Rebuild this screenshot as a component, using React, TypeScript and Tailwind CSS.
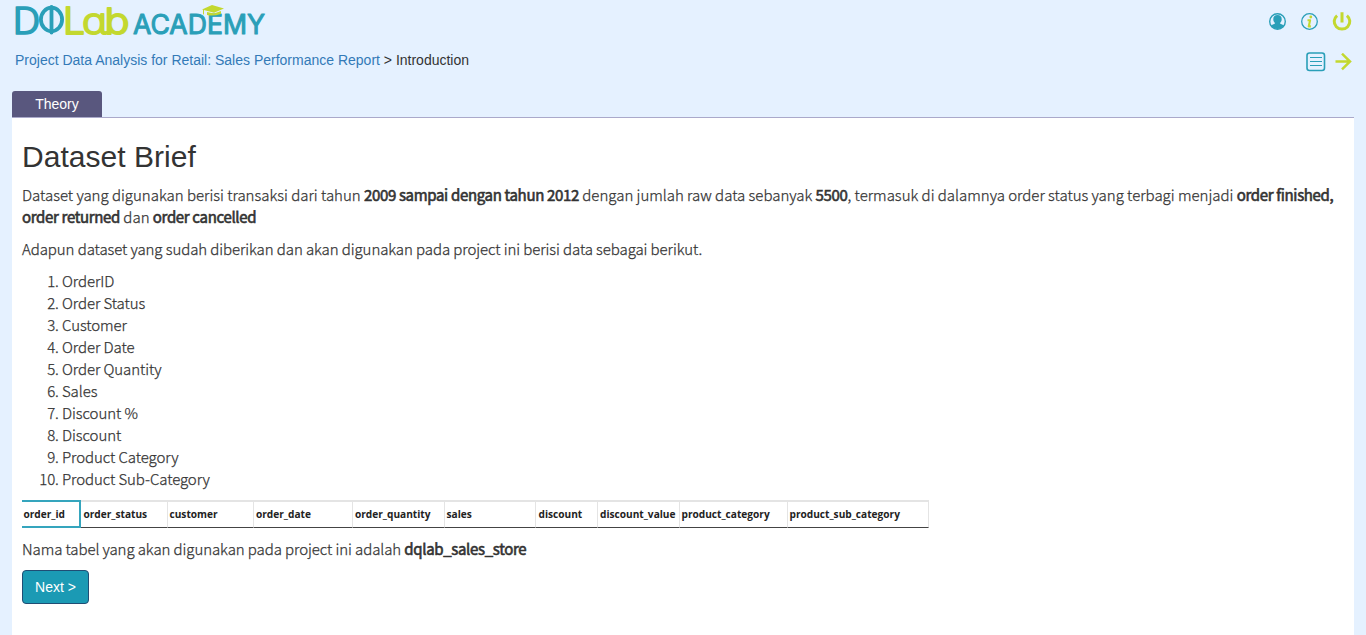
import React from "react";

const fields = [
  "OrderID",
  "Order Status",
  "Customer",
  "Order Date",
  "Order Quantity",
  "Sales",
  "Discount %",
  "Discount",
  "Product Category",
  "Product Sub-Category",
];

const columns = [
  { name: "order_status", width: "w-[87px] pl-[2.5px]" },
  { name: "customer", width: "w-[86px] pl-[1.5px]" },
  { name: "order_date", width: "w-[99px] pl-[2px]" },
  { name: "order_quantity", width: "w-[92px] pl-[2px]" },
  { name: "sales", width: "w-[91px] pl-[1.5px]" },
  { name: "discount", width: "w-[62px] pl-[2.5px]" },
  { name: "discount_value", width: "w-[82px] pl-[2px]" },
  { name: "product_category", width: "w-[108px] pl-[1.5px]" },
  { name: "product_sub_category", width: "w-[141px] pl-[1.5px]" },
];

function Bold({ children }: { children: React.ReactNode }) {
  return <b className="font-normal tracking-[-0.33px] [-webkit-text-stroke:0.6px_#333]">{children}</b>;
}

function Logo() {
  return (
    <svg width="256" height="40" viewBox="0 0 256 40" className="block overflow-visible font-['Inter',sans-serif]" strokeLinejoin="round" strokeLinecap="round">
      <g fill="#2a9fb8" stroke="#2a9fb8" strokeWidth="1.7">
        <text x="-2.300" y="34" fontSize="36.500" fontWeight="300" textLength="27.500" lengthAdjust="spacingAndGlyphs">D</text>
        <g fill="none" strokeWidth="3.800">
          <ellipse cx="36.500" cy="19.500" rx="10.600" ry="11.800" />
          <path d="M36.500 7v25.500" />
        </g>
      </g>
      <g fill="#c3d82f" stroke="#c3d82f" strokeWidth="1.900">
        <text x="48" y="34" fontSize="36.500" fontWeight="300" textLength="22" lengthAdjust="spacingAndGlyphs">L</text>
        <text x="67" y="34" fontSize="36" fontFamily="Noto Sans" fontWeight="300" textLength="25" lengthAdjust="spacingAndGlyphs">ɑ</text>
        <text x="89.500" y="34" fontSize="36" fontWeight="300" textLength="25" lengthAdjust="spacingAndGlyphs">b</text>
      </g>
      <text x="118" y="34" fontSize="26.5" fontWeight="400" fill="#2a9fb8" stroke="#2a9fb8" strokeWidth="1" textLength="132" lengthAdjust="spacingAndGlyphs">ACADEMY</text>
      <path d="M187 9.5 197 5 209 8.500 199 12.800Z" fill="#c3d82f" />
      <path d="M192 12v3q6 1.500 14-1v-3l-7 2.600Z" fill="#c3d82f" />
      <path d="M188.500 10v4" stroke="#c3d82f" />
    </svg>
  );
}

function UserIcon() {
  return (
    <svg width="18" height="18" viewBox="-0.5 0.5 18 18">
      <circle cx="9" cy="9" r="7.800" fill="#e5f1ff" stroke="#2a9fb8" strokeWidth="1.400" />
      <path d="M9 2.600c2.800 0 4.400 1.900 4.200 4.300-.1 1.700-.8 2.700-1.500 3.400v1c2 .5 3.300 1.200 3.600 2.300A7.400 7.400 0 0 1 9 16.600a7.400 7.400 0 0 1-6.300-3c.3-1.100 1.600-1.800 3.600-2.300v-1C5.600 9.600 4.900 8.600 4.800 6.900 4.600 4.500 6.200 2.600 9 2.600Z" fill="#2a9fb8" />
    </svg>
  );
}

function InfoIcon() {
  return (
    <svg width="18" height="18" viewBox="-0.5 0.5 18 18" fill="none">
      <circle cx="9" cy="9" r="7.800" stroke="#2a9fb8" strokeWidth="1.300" />
      <circle cx="10.300" cy="4.500" r="1.400" fill="#c3d82f" />
      <path d="M7 7.800h2.600L8.200 13.900h2.200" stroke="#c3d82f" strokeWidth="2.100" strokeLinejoin="round" />
    </svg>
  );
}

function PowerIcon() {
  return (
    <svg width="20" height="20" viewBox="-0.5 0 20 20" fill="none" stroke="#c3d82f" strokeWidth="3">
      <path d="M4.600 3.600a7.800 7.600 0 1 0 9.800 0M9.500 0.300v10.200" />
    </svg>
  );
}

function ListIcon() {
  return (
    <svg width="20" height="20" viewBox="0 0 20 20" fill="none" stroke="#2a9fb8">
      <rect x="1" y="1" width="17.500" height="17.500" rx="2.500" strokeWidth="1.600" />
      <path d="M4 5.500h12M4 9.500h12M4 13.500h12" strokeWidth="1.100" />
    </svg>
  );
}

function ArrowIcon() {
  return (
    <svg width="17" height="18" viewBox="0 0.500 17 18" fill="none" stroke="#c3d82f" strokeWidth="2.500">
      <path d="M0.500 9h14.500M7 1.200 15 9l-8 7.800" />
    </svg>
  );
}

export default function App() {
  return (
    <div className="flex h-[635px] flex-col overflow-hidden bg-[#e5f1ff] px-3 font-['Liberation_Sans',Arial,sans-serif] text-sm text-[#333]">
      <header className="flex h-[91px] shrink-0 justify-between">
        <div className="flex flex-col pl-[3px]">
          <Logo />
          <nav className="mt-[10px] leading-5">
            <a className="text-[#337ab7]">Project Data Analysis for Retail: Sales Performance Report</a> &gt; Introduction
          </nav>
        </div>
        <div className="flex flex-col items-end pr-[2px]">
          <div className="mt-3 flex h-5 items-center gap-[14px]">
            <UserIcon />
            <InfoIcon />
            <PowerIcon />
          </div>
          <div className="mt-5 flex h-5 items-center gap-[9px]">
            <ListIcon />
            <ArrowIcon />
          </div>
        </div>
      </header>
      <div className="flex h-[26px] shrink-0">
        <div className="w-[90px] rounded-t-[3px] bg-[#59577e] text-center leading-[26px] text-white">Theory</div>
      </div>
      <main className="flex-1 border-t border-[#aaa9ca] bg-white px-[10px] pt-[22px] font-['Noto_Sans_CJK_SC',sans-serif] text-[15px] leading-[22px] font-light tracking-[-0.08px]">
        <h1 className="font-['Liberation_Sans',Arial,sans-serif] text-[30px] leading-[34px] font-normal tracking-[0.03px]">Dataset Brief</h1>
        <div className="mt-[10px] [-webkit-text-stroke:0.25px_#333]">
          <p className="tracking-[-0.01px]">
            Dataset yang digunakan berisi transaksi dari tahun <Bold>2009 sampai dengan tahun 2012</Bold> dengan jumlah raw data sebanyak <Bold>5500</Bold>, termasuk di dalamnya order status yang terbagi menjadi <Bold>order finished,</Bold>
            <br />
            <Bold>order returned</Bold> dan <Bold>order cancelled</Bold>
          </p>
          <p className="mt-[10px]">Adapun dataset yang sudah diberikan dan akan digunakan pada project ini berisi data sebagai berikut.</p>
          <ol className="mt-[10px] list-decimal pl-10">
            {fields.map((f) => (
              <li key={f}>{f}</li>
            ))}
          </ol>
        </div>
        <div className="mt-[10px] flex h-7 w-[907px] font-['Open_Sans',sans-serif] text-[10.15px] leading-[25px] font-bold tracking-normal text-[#222]">
          <div className="w-[59px] border-t-2 border-r-2 border-b-2 border-[#35a5bd] pl-[1.5px]">order_id</div>
          {columns.map((c) => (
            <div key={c.name} className={`${c.width} border-t-2 border-r border-b border-[#e4e4e4] border-b-[#444]`}>
              {c.name}
            </div>
          ))}
        </div>
        <p className="mt-[10px] [-webkit-text-stroke:0.25px_#333]">
          Nama tabel yang akan digunakan pada project ini adalah <Bold>dqlab_sales_store</Bold>
        </p>
        <button className="mt-[10px] block h-[34px] w-[67px] rounded border border-[#204d74] bg-[#1b9ab4] font-['Liberation_Sans',Arial,sans-serif] text-sm font-normal tracking-normal text-white">Next &gt;</button>
      </main>
    </div>
  );
}
